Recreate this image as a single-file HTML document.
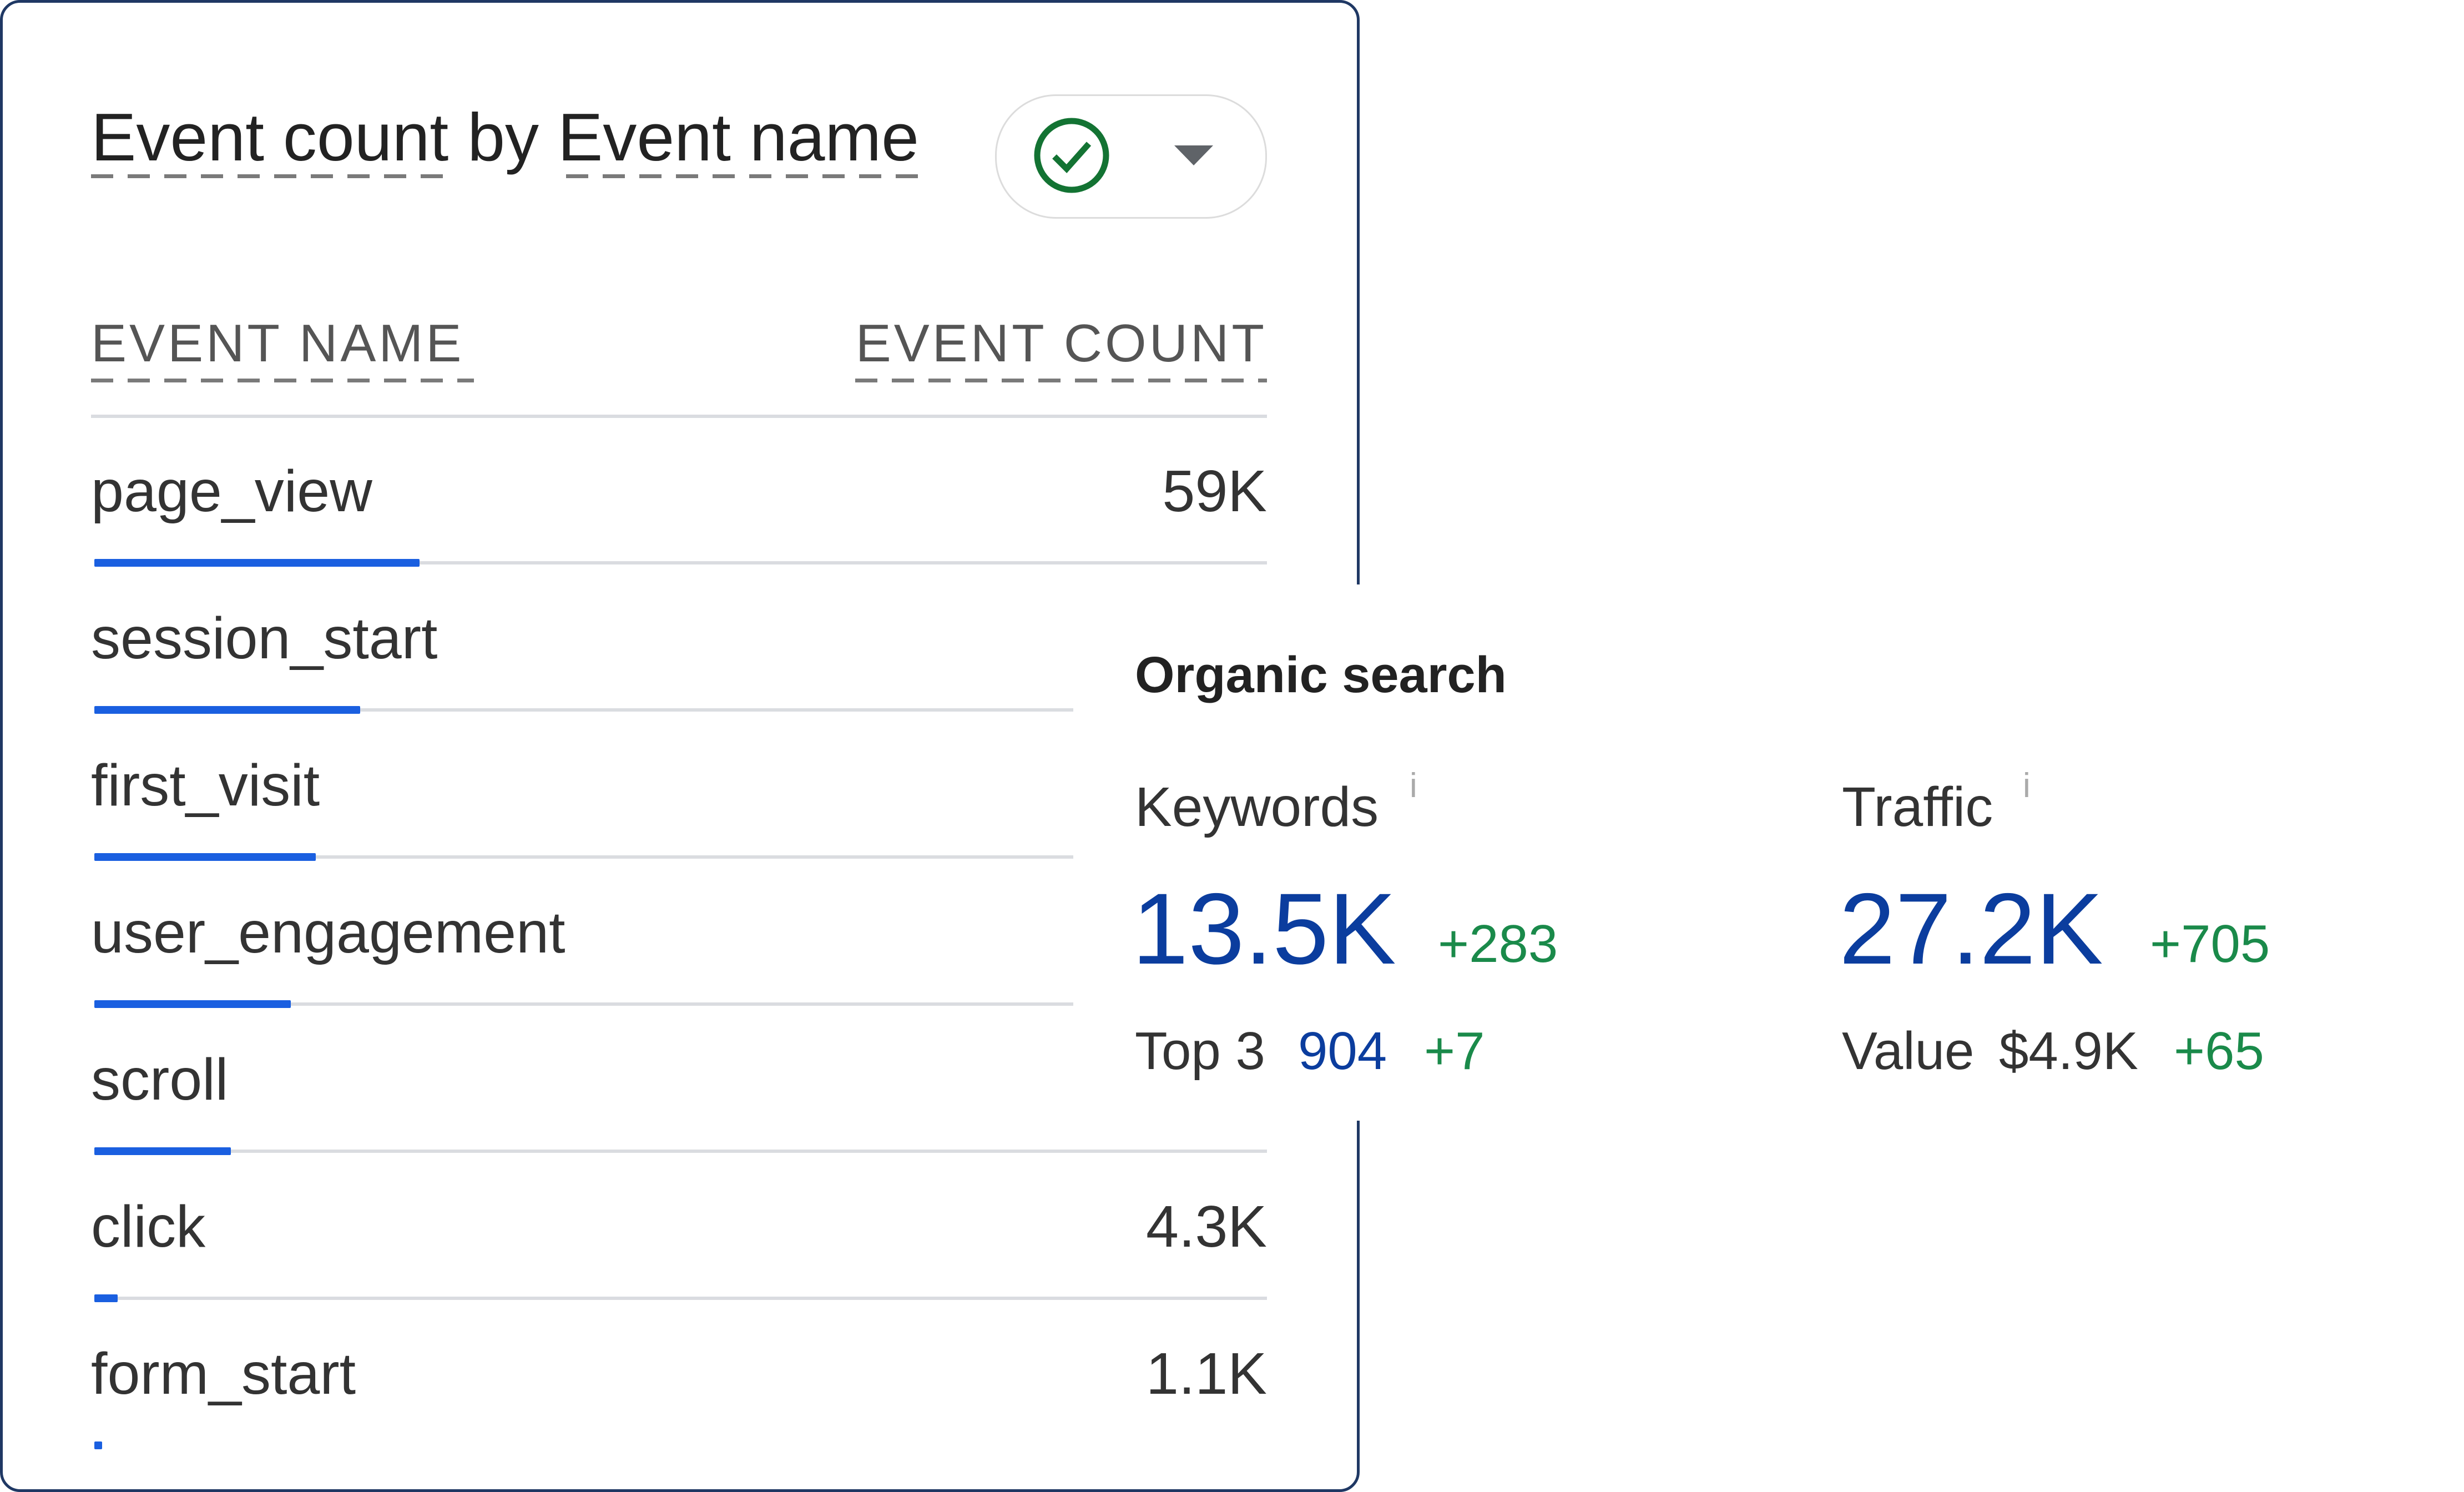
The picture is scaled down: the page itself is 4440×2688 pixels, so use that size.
<!DOCTYPE html>
<html><head><meta charset="utf-8"><style>
html,body{margin:0;padding:0;background:#fff;}
body{width:4440px;height:2688px;position:relative;overflow:hidden;font-family:"Liberation Sans",Arial,sans-serif;}
.a{position:absolute;line-height:1;white-space:nowrap;}
.card{position:absolute;left:0;top:0;width:2440px;height:2678px;border:5px solid #1f3864;border-radius:36px;}
.dash{position:absolute;height:7px;background:repeating-linear-gradient(90deg,#7a7a7a 0 40px,transparent 40px 66px);}
.line{position:absolute;height:6px;background:#dadce0;}
.bar{position:absolute;height:14px;background:#1a5fe0;border-radius:2px;}
.row{font-size:106px;color:#333;}
.val{font-size:106px;color:#333;text-align:right;}
.ov{position:absolute;left:1934px;top:1053px;width:2506px;height:966px;background:#fff;}
.g{color:#1a8a4a;}
.b{color:#0b3d9e;}
</style></head><body>
<div class="card"></div>
<div class="a" style="left:164px;top:186px;font-size:122px;color:#222;">Event count by Event name</div>
<div class="dash" style="left:164px;top:314px;width:660px;"></div>
<div class="dash" style="left:1020px;top:314px;width:652px;"></div>
<div style="position:absolute;left:1793px;top:170px;width:484px;height:218px;border:3px solid #dcdcdc;border-radius:110px;"></div>
<svg style="position:absolute;left:1860px;top:209px" width="142" height="142" viewBox="0 0 142 142"><circle cx="71" cy="71" r="62" fill="none" stroke="#137333" stroke-width="11"/><path d="M40 73 L62 95 L102 50" fill="none" stroke="#137333" stroke-width="11"/></svg>
<svg style="position:absolute;left:2116px;top:262px" width="70" height="38"><path d="M0 0 L70 0 L35 36 Z" fill="#5f6368"/></svg>
<div class="a" style="left:164px;top:571px;font-size:96px;letter-spacing:5px;color:#555;">EVENT NAME</div>
<div class="dash" style="left:164px;top:682px;width:690px;"></div>
<div class="a" style="right:2157px;top:571px;font-size:96px;letter-spacing:5px;color:#555;">EVENT COUNT</div>
<div class="dash" style="left:1541px;top:682px;width:742px;"></div>
<div class="line" style="left:164px;top:747px;width:2119px;"></div>

<div class="a row" style="left:164px;top:832px;">page_view</div>
<div class="a val" style="right:2157px;top:832px;">59K</div>
<div class="line" style="left:170px;top:1011px;width:2113px;"></div>
<div class="bar" style="left:170px;top:1007px;width:586px;"></div>

<div class="a row" style="left:164px;top:1097px;">session_start</div>
<div class="line" style="left:170px;top:1276px;width:2113px;"></div>
<div class="bar" style="left:170px;top:1272px;width:479px;"></div>

<div class="a row" style="left:164px;top:1362px;">first_visit</div>
<div class="line" style="left:170px;top:1541px;width:2113px;"></div>
<div class="bar" style="left:170px;top:1537px;width:399px;"></div>

<div class="a row" style="left:164px;top:1627px;">user_engagement</div>
<div class="line" style="left:170px;top:1806px;width:2113px;"></div>
<div class="bar" style="left:170px;top:1802px;width:354px;"></div>

<div class="a row" style="left:164px;top:1892px;">scroll</div>
<div class="line" style="left:170px;top:2071px;width:2113px;"></div>
<div class="bar" style="left:170px;top:2067px;width:246px;"></div>

<div class="a row" style="left:164px;top:2157px;">click</div>
<div class="a val" style="right:2157px;top:2157px;">4.3K</div>
<div class="line" style="left:170px;top:2336px;width:2113px;"></div>
<div class="bar" style="left:170px;top:2332px;width:42px;"></div>

<div class="a row" style="left:164px;top:2422px;">form_start</div>
<div class="a val" style="right:2157px;top:2422px;">1.1K</div>
<div class="bar" style="left:170px;top:2597px;width:14px;"></div>

<div class="ov"></div>
<div class="a" style="left:2045px;top:1170px;font-size:92px;font-weight:bold;color:#222;">Organic search</div>
<div class="a" style="left:2045px;top:1404px;font-size:100px;color:#333;">Keywords</div>
<div class="a" style="left:2540px;top:1385px;font-size:62px;color:#aaa;">i</div>
<div class="a" style="left:3319px;top:1404px;font-size:100px;color:#333;">Traffic</div>
<div class="a" style="left:3645px;top:1385px;font-size:62px;color:#aaa;">i</div>
<div class="a b" style="left:2040px;top:1582px;font-size:182px;">13.5K</div>
<div class="a g" style="left:2591px;top:1653px;font-size:96px;">+283</div>
<div class="a b" style="left:3314px;top:1582px;font-size:182px;">27.2K</div>
<div class="a g" style="left:3874px;top:1653px;font-size:96px;">+705</div>
<div class="a" style="left:2045px;top:1846px;font-size:96px;color:#333;">Top 3</div>
<div class="a b" style="left:2339px;top:1846px;font-size:96px;">904</div>
<div class="a g" style="left:2566px;top:1846px;font-size:96px;">+7</div>
<div class="a" style="left:3319px;top:1846px;font-size:96px;color:#333;">Value</div>
<div class="a" style="left:3602px;top:1846px;font-size:96px;color:#333;">$4.9K</div>
<div class="a g" style="left:3917px;top:1846px;font-size:96px;">+65</div>
</body></html>
